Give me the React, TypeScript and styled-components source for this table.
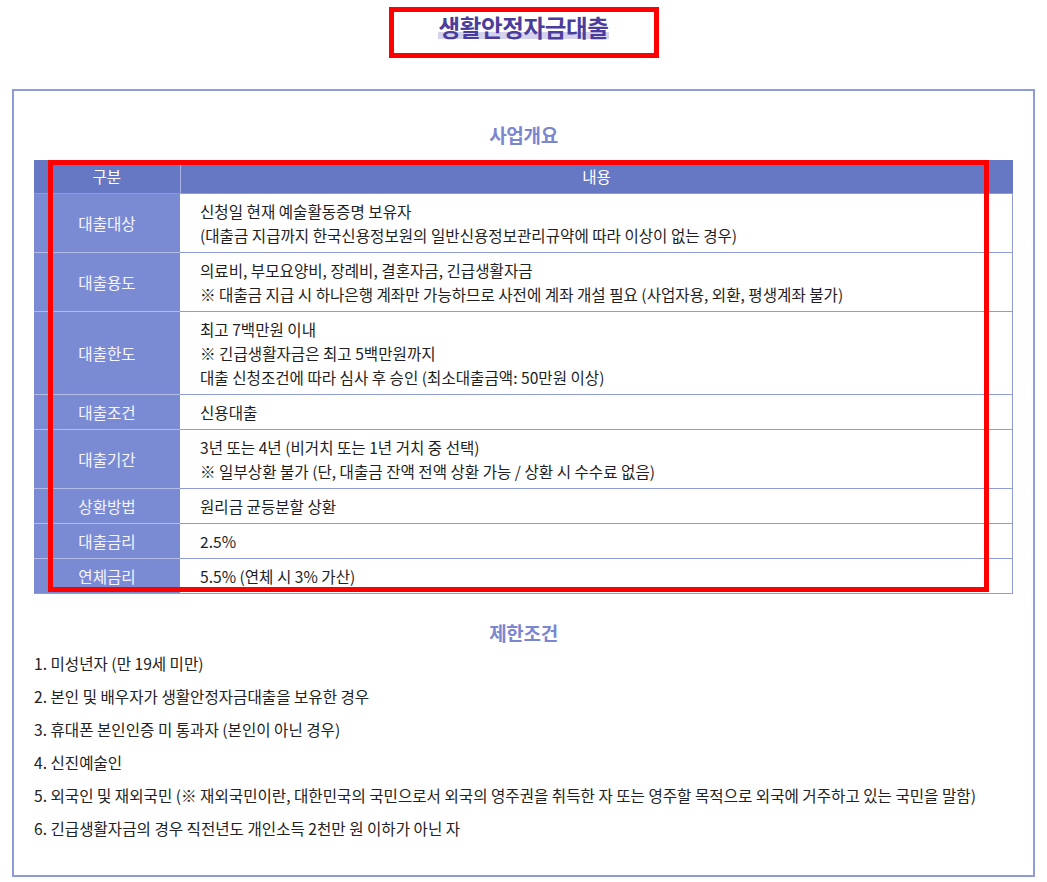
import React from "react";
import styled, { createGlobalStyle } from "styled-components";

const GlobalStyle = createGlobalStyle`
  html, body { margin: 0; padding: 0; background: #ffffff; }
  body {
    font-family: "Noto Sans CJK KR", "Noto Sans", sans-serif;
    color: #222222;
  }
  * { box-sizing: border-box; }
`;

const Page = styled.div`
  width: 1047px;
  padding-top: 7px;
`;

const TitleBox = styled.div`
  width: 270px;
  height: 51px;
  margin: 0 auto;
  border: 5px solid #ff0000;
  display: flex;
  justify-content: center;
  align-items: flex-start;
`;

const Title = styled.h1`
  margin: 0;
  font-size: 23.5px;
  font-weight: 700;
  line-height: 30px;
  color: #4a3d9c;
  letter-spacing: -0.4px;
`;

const TitleMark = styled.span`
  background: linear-gradient(to bottom, transparent 66%, #d5d2ee 66%, #d5d2ee 86%, transparent 86%);
  padding: 0 1px;
`;

const Frame = styled.section`
  margin: 31px 12px 0 12px;
  border: 2px solid #8f9ad8;
  padding: 32px 20px 30px 20px;
`;

const SectionTitle = styled.h2<{ $top?: number }>`
  margin: ${(p) => p.$top ?? 0}px 0 0 0;
  text-align: center;
  font-size: 19px;
  font-weight: 700;
  line-height: 24px;
  color: #7b86d0;
  letter-spacing: -0.3px;
`;

const TableWrap = styled.div`
  position: relative;
  margin-top: 13px;
`;

const Table = styled.table`
  width: 100%;
  border-collapse: collapse;
  font-size: 15.6px;
  line-height: 24px;
`;

const HeadCell = styled.th<{ $first?: boolean }>`
  background: #6677c4;
  color: #ffffff;
  font-weight: 400;
  text-align: center;
  padding: 4px 0;
  height: 33px;
  border-right: ${(p) => (p.$first ? "1px solid #aab3e6" : "none")};
  border-bottom: 1px solid #8f9ad8;
  width: ${(p) => (p.$first ? "146px" : "auto")};
`;

const LabelCell = styled.th<{ $last?: boolean }>`
  background: #7b8bd3;
  color: #f4f5ff;
  font-weight: 400;
  text-align: center;
  vertical-align: middle;
  padding: 5px 0;
  width: 146px;
  border-bottom: 1px solid ${(p) => (p.$last ? "#8f9ad8" : "#b4bcea")};
`;

const ContentCell = styled.td`
  padding: 5px 20px;
  text-align: left;
  vertical-align: middle;
  color: #1e1e1e;
  border-bottom: 1px solid #8f9ad8;
  border-right: 1px solid #8f9ad8;
`;

const Line = styled.div`
  white-space: nowrap;
`;

const Annotation = styled.div`
  position: absolute;
  left: 14px;
  top: 0;
  width: 941px;
  height: 432px;
  border: 5px solid #ff0000;
  pointer-events: none;
`;

const List = styled.ol`
  list-style: none;
  margin: 2px 0 0 0;
  padding: 0;
  font-size: 15.6px;
`;

const Item = styled.li`
  line-height: 33px;
  color: #222222;
  white-space: nowrap;
`;

const rows: { label: string; lines: string[] }[] = [
  {
    label: "대출대상",
    lines: [
      "신청일 현재 예술활동증명 보유자",
      "(대출금 지급까지 한국신용정보원의 일반신용정보관리규약에 따라 이상이 없는 경우)",
    ],
  },
  {
    label: "대출용도",
    lines: [
      "의료비, 부모요양비, 장례비, 결혼자금, 긴급생활자금",
      "※ 대출금 지급 시 하나은행 계좌만 가능하므로 사전에 계좌 개설 필요 (사업자용, 외환, 평생계좌 불가)",
    ],
  },
  {
    label: "대출한도",
    lines: [
      "최고 7백만원 이내",
      "※ 긴급생활자금은 최고 5백만원까지",
      "대출 신청조건에 따라 심사 후 승인 (최소대출금액: 50만원 이상)",
    ],
  },
  { label: "대출조건", lines: ["신용대출"] },
  {
    label: "대출기간",
    lines: [
      "3년 또는 4년 (비거치 또는 1년 거치 중 선택)",
      "※ 일부상환 불가 (단, 대출금 잔액 전액 상환 가능 / 상환 시 수수료 없음)",
    ],
  },
  { label: "상환방법", lines: ["원리금 균등분할 상환"] },
  { label: "대출금리", lines: ["2.5%"] },
  { label: "연체금리", lines: ["5.5% (연체 시 3% 가산)"] },
];

const limits = [
  "1. 미성년자 (만 19세 미만)",
  "2. 본인 및 배우자가 생활안정자금대출을 보유한 경우",
  "3. 휴대폰 본인인증 미 통과자 (본인이 아닌 경우)",
  "4. 신진예술인",
  "5. 외국인 및 재외국민 (※ 재외국민이란, 대한민국의 국민으로서 외국의 영주권을 취득한 자 또는 영주할 목적으로 외국에 거주하고 있는 국민을 말함)",
  "6. 긴급생활자금의 경우 직전년도 개인소득 2천만 원 이하가 아닌 자",
];

export default function App() {
  return (
    <Page>
      <GlobalStyle />
      <TitleBox>
        <Title>
          <TitleMark>생활안정자금대출</TitleMark>
        </Title>
      </TitleBox>
      <Frame>
        <SectionTitle>사업개요</SectionTitle>
        <TableWrap>
          <Table>
            <thead>
              <tr>
                <HeadCell $first>구분</HeadCell>
                <HeadCell>내용</HeadCell>
              </tr>
            </thead>
            <tbody>
              {rows.map((r, i) => (
                <tr key={r.label}>
                  <LabelCell $last={i === rows.length - 1}>{r.label}</LabelCell>
                  <ContentCell>
                    {r.lines.map((l) => (
                      <Line key={l}>{l}</Line>
                    ))}
                  </ContentCell>
                </tr>
              ))}
            </tbody>
          </Table>
          <Annotation />
        </TableWrap>
        <SectionTitle $top={27}>제한조건</SectionTitle>
        <List>
          {limits.map((t) => (
            <Item key={t}>{t}</Item>
          ))}
        </List>
      </Frame>
    </Page>
  );
}
